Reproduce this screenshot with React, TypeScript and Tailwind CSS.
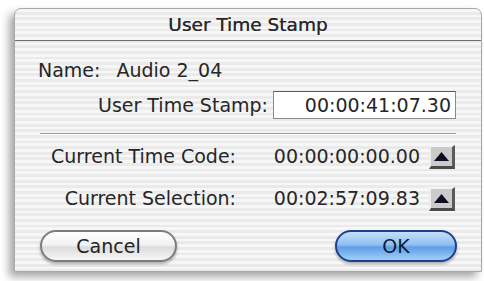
const stripes =
  "bg-[repeating-linear-gradient(180deg,#f7f7f7_0px,#f7f7f7_2.8px,#eaeaea_2.8px,#eaeaea_5.6px)]";

function ArrowButton() {
  return (
    <div className="w-[26px] h-[24px] ml-[9px] flex items-center justify-center bg-[#cbcbcb] border-t-[2px] border-l-[2px] border-t-[#f4f4f4] border-l-[#eeeeee] border-b-[3px] border-r-[3px] border-b-[#4a4a4a] border-r-[#5a5a5a]">
      <svg width="15" height="9" viewBox="0 0 15 9">
        <polygon points="7.5,0 15,9 0,9" fill="#0e0e22" />
      </svg>
    </div>
  );
}

export default function App() {
  return (
    <div
      className="w-[484px] h-[281px] bg-white pl-[14px] pt-[8px] pr-[2px] pb-[9px]"
      style={{ fontFamily: '"DejaVu Sans", sans-serif' }}
    >
      <div
        className={`h-full flex flex-col border border-[#a8a8a8] rounded-t-[7px] shadow-[-5px_5px_9px_rgba(0,0,0,0.35)] ${stripes} text-[#262626]`}
      >
        <div className="h-[32px] flex items-center justify-center border-b border-[#6e6e6e] text-[18.5px] text-[#2a2a2a] [text-shadow:0_0_0.4px_#2a2a2a]">
          User Time Stamp
        </div>

        <div className="flex flex-col text-[19px]">
          <div className="flex items-center h-[23px] mt-[18px] pl-[23px]">
            <span>Name:</span>
            <span className="ml-[16px]">Audio 2_04</span>
          </div>

          <div className="flex items-center mt-[9px]">
            <div className="w-[253px] text-right">User Time Stamp:</div>
            <div className="ml-[5px] w-[183px] h-[28px] bg-white border border-[#8a8a8a] border-t-[#5e5e5e] flex items-center justify-end pr-[4px]">
              00:00:41:07.30
            </div>
          </div>

          <div className="mx-[25px] mt-[13px] h-[2px] border-t border-[#9a9a9a] border-b border-b-white" />

          <div className="flex items-center mt-[10px] h-[24px]">
            <div className="w-[221px] text-right">Current Time Code:</div>
            <div className="ml-[37px] w-[147px] text-right">00:00:00:00.00</div>
            <ArrowButton />
          </div>

          <div className="flex items-center mt-[18px] h-[24px]">
            <div className="w-[221px] text-right">Current Selection:</div>
            <div className="ml-[37px] w-[147px] text-right">00:02:57:09.83</div>
            <ArrowButton />
          </div>
        </div>

        <div className="flex justify-between items-center mt-[19px] pl-[25px] pr-[24px]">
          <button className="w-[137px] h-[32px] rounded-full border-[2px] border-[#7c7c7c] bg-[linear-gradient(180deg,#ffffff_0%,#f2f2f2_45%,#dcdcdc_55%,#f7f7f7_100%)] shadow-[0_2px_3px_rgba(0,0,0,0.3)] text-[19px] text-[#222]">
            Cancel
          </button>
          <button className="w-[122px] h-[32px] rounded-full border-[2px] border-[#1f3f8c] bg-[linear-gradient(180deg,#c5e0fb_0%,#8fc0f1_45%,#5f9fe6_55%,#9ed0fb_100%)] shadow-[0_2px_3px_rgba(0,0,0,0.3)] text-[19px] text-[#0c1a33]">
            OK
          </button>
        </div>
      </div>
    </div>
  );
}
